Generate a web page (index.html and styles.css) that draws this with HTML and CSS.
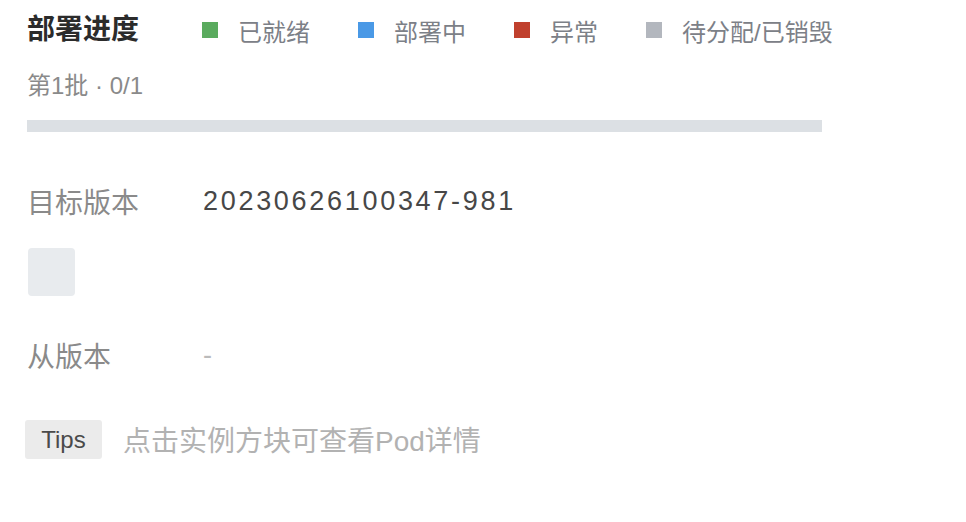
FILE: index.html
```html
<!DOCTYPE html>
<html lang="zh-CN">
  <head>
    <meta charset="UTF-8" />
    <meta name="viewport" content="width=device-width, initial-scale=1.0" />
    <title>部署进度</title>
    <link rel="stylesheet" href="styles.css">
  </head>

  <body>
    <div class="panel">
      <div class="header">
        <h1 class="title">部署进度</h1>
        <ul class="legend">
          <li><span class="dot dot-ready"></span>已就绪</li>
          <li><span class="dot dot-deploying"></span>部署中</li>
          <li><span class="dot dot-error"></span>异常</li>
          <li><span class="dot dot-pending"></span>待分配/已销毁</li>
        </ul>
      </div>

      <div class="batch">第1批 · 0/1</div>
      <div class="progress"><div class="progress-fill" style="width: 0%"></div></div>

      <div class="row row-target">
        <span class="label">目标版本</span>
        <span class="value">20230626100347-981</span>
      </div>
      <div class="pods">
        <div class="pod"></div>
      </div>

      <div class="row row-from">
        <span class="label">从版本</span>
        <span class="value empty">-</span>
      </div>

      <div class="tips">
        <span class="tips-tag">Tips</span>
        <span class="tips-text">点击实例方块可查看Pod详情</span>
      </div>
    </div>
  </body>
</html>
```

FILE: styles.css
```css
body {
  margin: 0;
  background-color: #fff;
  font-family: "Liberation Sans", "Noto Sans CJK SC", sans-serif;
  color: #333;
}

.panel {
  padding: 12px 0 0 27px;
}

.header {
  display: flex;
  align-items: center;
  height: 36px;
}

.title {
  margin: 0 63px 0 0;
  font-size: 28px;
  font-weight: bold;
  color: #2b2b2b;
  line-height: 36px;
}

.legend {
  display: flex;
  margin: 0;
  padding: 0;
  list-style: none;
}

.legend li {
  display: flex;
  align-items: center;
  margin-right: 48px;
  font-size: 24px;
  color: #7c8087;
}

.dot {
  width: 16px;
  height: 16px;
  margin-right: 20px;
}

.dot-ready {
  background-color: #5aab5e;
}

.dot-deploying {
  background-color: #4a99e6;
}

.dot-error {
  background-color: #c0402d;
}

.dot-pending {
  background-color: #b3b7be;
}

.batch {
  margin-top: 24px;
  font-size: 24px;
  line-height: 28px;
  color: #8a8a8a;
}

.progress {
  width: 795px;
  height: 12px;
  margin-top: 20px;
  background-color: #dce0e4;
}

.progress-fill {
  height: 100%;
  background-color: #5aab5e;
}

.row {
  display: flex;
  align-items: center;
  height: 36px;
}

.row-target {
  margin-top: 51px;
}

.row-from {
  margin-top: 41px;
}

.label {
  width: 176px;
  font-size: 28px;
  color: #8a8a8a;
}

.value {
  font-size: 27px;
  letter-spacing: 2.7px;
  color: #474747;
}

.value.empty {
  color: #bbb;
  letter-spacing: 0;
}

.pods {
  display: flex;
  margin-top: 29px;
  padding-left: 1px;
}

.pod {
  width: 47px;
  height: 48px;
  border-radius: 4px;
  background-color: #e8ebee;
}

.tips {
  display: flex;
  align-items: center;
  margin: 46px 0 0 -2px;
}

.tips-tag {
  width: 77px;
  height: 39px;
  line-height: 39px;
  text-align: center;
  border-radius: 3px;
  background-color: #ebebeb;
  font-size: 24px;
  color: #4a4a4a;
}

.tips-text {
  margin-left: 21px;
  font-size: 28px;
  color: #b2b2b2;
}
```
